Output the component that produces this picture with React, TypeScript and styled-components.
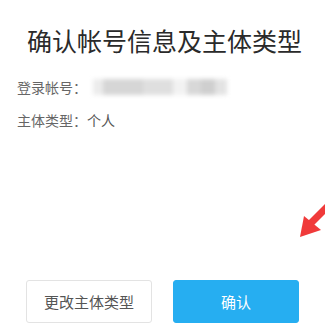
import styled, { createGlobalStyle } from "styled-components";

const Global = createGlobalStyle`
    html, body {
        margin: 0;
        padding: 0;
        background: #ffffff;
    }
    body {
        font-family: "Noto Sans CJK SC", "Noto Sans", sans-serif;
    }
`;

const Page = styled.div`
    position: relative;
    width: 325px;
    height: 333px;
    overflow: hidden;
    display: flex;
    flex-direction: column;
    box-sizing: border-box;
    padding-top: 24px;
`;

const Title = styled.h1`
    margin: 0;
    font-size: 25px;
    font-weight: 400;
    line-height: 32px;
    color: #2a2a2a;
    text-align: center;
    padding-left: 4px;
`;

const InfoList = styled.div`
    display: flex;
    flex-direction: column;
    gap: 11px;
    padding-left: 17px;
    margin-top: 20px;
`;

const Row = styled.div`
    display: flex;
    align-items: center;
    height: 22px;
    font-size: 14px;
    color: #666;
`;

const Label = styled.span`
    white-space: nowrap;
`;

const Value = styled.span`
    color: #555;
`;

const Blurred = styled.div`
    display: flex;
    align-items: center;
    margin-left: 6px;
    filter: blur(2px);
`;

const Patch = styled.div<{ $w: number; $c: string }>`
    width: ${(p) => p.$w}px;
    height: 16px;
    background: ${(p) => p.$c};
`;

const Footer = styled.div`
    margin-top: auto;
    margin-bottom: 10px;
    display: flex;
    gap: 21px;
    padding-left: 26px;
`;

const Button = styled.button<{ $primary?: boolean }>`
    width: 126px;
    height: 43px;
    border-radius: 3px;
    font-family: inherit;
    font-size: 15px;
    cursor: pointer;
    border: 1px solid ${(p) => (p.$primary ? "#26aef1" : "#e3e3e3")};
    background: ${(p) => (p.$primary ? "#26aef1" : "#ffffff")};
    color: ${(p) => (p.$primary ? "#ffffff" : "#555")};
`;

const Arrow = styled.svg`
    position: absolute;
    left: 296px;
    top: 196px;
`;

export default function App() {
    return (
        <>
            <Global />
            <Page>
                <Title>确认帐号信息及主体类型</Title>
                <InfoList>
                    <Row>
                        <Label>登录帐号：</Label>
                        <Blurred>
                            <Patch $w={10} $c="#ececec" />
                            <Patch $w={40} $c="#d6d6d6" />
                            <Patch $w={30} $c="#dfdfdf" />
                            <Patch $w={14} $c="#f2f2f2" />
                            <Patch $w={14} $c="#d8d8d8" />
                            <Patch $w={14} $c="#cfcfcf" />
                            <Patch $w={12} $c="#e3e3e3" />
                        </Blurred>
                    </Row>
                    <Row>
                        <Label>主体类型：</Label>
                        <Value>个人</Value>
                    </Row>
                </InfoList>
                <Footer>
                    <Button>更改主体类型</Button>
                    <Button $primary>确认</Button>
                </Footer>
                <Arrow width="30" height="44" viewBox="0 0 30 44">
                    <line x1="36" y1="6" x2="14" y2="28" stroke="#f03a3a" strokeWidth="7" />
                    <polygon points="4,41 8,20 25,34" fill="#f03a3a" />
                </Arrow>
            </Page>
        </>
    );
}
